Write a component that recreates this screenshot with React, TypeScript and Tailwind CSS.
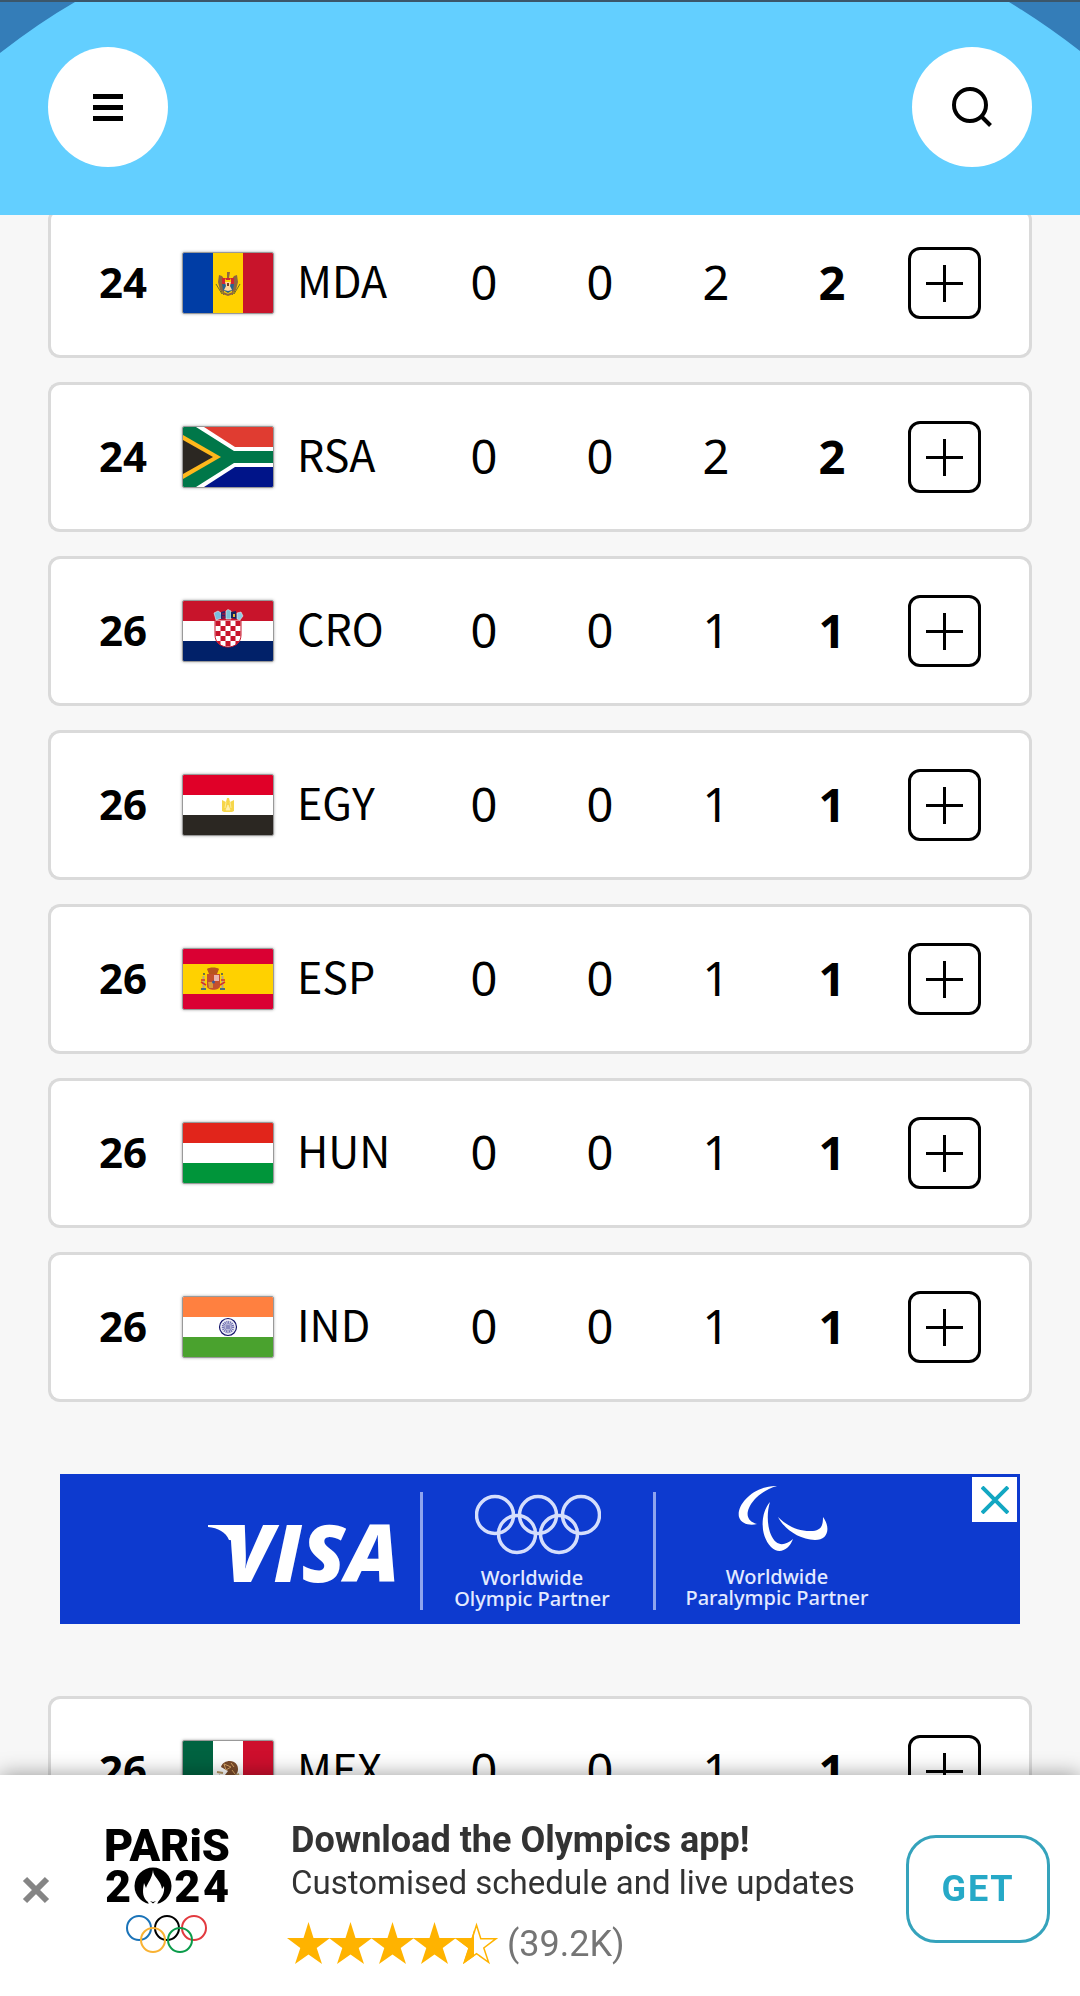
import React from "react";

type Row = { rank: number; code: string; gold: number; silver: number; bronze: number; total: number };

const before: Row[] = [
  { rank: 24, code: "MDA", gold: 0, silver: 0, bronze: 2, total: 2 },
  { rank: 24, code: "RSA", gold: 0, silver: 0, bronze: 2, total: 2 },
  { rank: 26, code: "CRO", gold: 0, silver: 0, bronze: 1, total: 1 },
  { rank: 26, code: "EGY", gold: 0, silver: 0, bronze: 1, total: 1 },
  { rank: 26, code: "ESP", gold: 0, silver: 0, bronze: 1, total: 1 },
  { rank: 26, code: "HUN", gold: 0, silver: 0, bronze: 1, total: 1 },
  { rank: 26, code: "IND", gold: 0, silver: 0, bronze: 1, total: 1 },
];

const after: Row[] = [{ rank: 26, code: "MEX", gold: 0, silver: 0, bronze: 1, total: 1 }];

function HBands({ colors }: { colors: [string, string, string] }) {
  return (
    <>
      <rect width="90" height="20" fill={colors[0]} />
      <rect y="20" width="90" height="20" fill={colors[1]} />
      <rect y="40" width="90" height="20" fill={colors[2]} />
    </>
  );
}

function VBands({ colors }: { colors: [string, string, string] }) {
  return (
    <>
      <rect width="30" height="60" fill={colors[0]} />
      <rect x="30" width="30" height="60" fill={colors[1]} />
      <rect x="60" width="30" height="60" fill={colors[2]} />
    </>
  );
}

const checks: [number, number][] = [];
for (let r = 0; r < 5; r++) for (let c = 0; c < 5; c++) if ((r + c) % 2 === 0) checks.push([c, r]);

const flags: Record<string, React.ReactNode> = {
  MDA: (
    <>
      <VBands colors={["#003da5", "#ffd100", "#c8142b"]} />
      <path d="M44 19h3l-1 6h-2zM36 22l3 1 2 3v14l-4-3-2-8zM54 22l-3 1-2 3v14l4-3 2-8z" fill="#8e6640" />
      <path d="M33 31l6 10M57 31l-6 10M38 38l3 4M52 38l-3 4" stroke="#6f6b2d" strokeWidth="1" />
      <path d="M39 25h12v6H39z" fill="#d22630" />
      <path d="M42 25l1 2h4l1-2v4h-6z" fill="#ffd100" />
      <path d="M39 31h12l-1 6-5 3-5-3z" fill="#27628f" />
      <path d="M42 29h6l-1 4 2 4-4 1-4-1 2-4z" fill="#ffd9a0" />
      <path d="M44 30h2v3h-2z" fill="#7b3d24" />
      <path d="M40 40l5 2 5-2" fill="none" stroke="#8e6640" strokeWidth="2" />
    </>
  ),
  RSA: (
    <>
      <rect width="90" height="60" fill="#fff" />
      <path d="M21 0H90V20H52Z" fill="#e03c31" />
      <path d="M21 60H90V40H52Z" fill="#001489" />
      <path d="M0 0H13L51 24H90V36H51L13 60H0Z" fill="#007749" />
      <path d="M0 8L38 30 0 52Z" fill="#ffb81c" />
      <path d="M0 13L30 30 0 47Z" fill="#2b2722" />
    </>
  ),
  CRO: (
    <>
      <HBands colors={["#c8142b", "#fff", "#012169"]} />
      <path d="M32 19V34C32 50 58 50 58 34V19Z" fill="#fff" stroke="#c8142b" strokeWidth="1" />
      <clipPath id="cro-shield">
        <path d="M32 19V34C32 50 58 50 58 34V19Z" />
      </clipPath>
      <g clipPath="url(#cro-shield)">
        {checks.map(([c, r]) => (
          <rect key={c + "-" + r} x={32.5 + c * 5} y={20 + r * 5} width="5" height="5" fill="#c8142b" />
        ))}
      </g>
      <path d="M31 12l4-2 3 2 1 5-6 2z" fill="#79bde0" stroke="#eee" strokeWidth=".6" />
      <path d="M38 11l4-1 1 7-5 1z" fill="#2a2468" />
      <path d="M43 10l2-1.500 3 1.500v8h-5z" fill="#7cc3d4" stroke="#eee" strokeWidth=".6" />
      <path d="M48 11l5-1 1 8-6-1z" fill="#17235d" />
      <path d="M54 12l4-1 2 4-3 4-3-1z" fill="#8ccce6" stroke="#eee" strokeWidth=".6" />
      <path d="M39 13h3M39 16h3" stroke="#c8142b" />
      <path d="M50 13h2v3h-2z" fill="#e6b73b" />
    </>
  ),
  EGY: (
    <>
      <HBands colors={["#e00028", "#fff", "#2b2722"]} />
      <path d="M39 25l4 2 1-4h2l1 4 4-2v11l-2 1h-8l-2-1z" fill="#f6d64a" />
      <path d="M43 27l-1 6M47 27l1 6M43 35l2-5 2 5z" fill="#fff0b0" stroke="#fff0b0" strokeWidth=".8" />
    </>
  ),
  ESP: (
    <>
      <rect width="90" height="60" fill="#da0033" />
      <rect y="15" width="90" height="30" fill="#ffd100" />
      <path d="M24 20c2-2 10-2 12 0l-2 5h-8z" fill="#b8541f" />
      <path d="M24 25h13v12c0 5-13 5-13 0z" fill="#c4502d" />
      <path d="M31 26h5v6h-5z" fill="#eab5b0" />
      <path d="M25 33h5v6h-4z" fill="#d89a3a" />
      <circle cx="30.500" cy="33" r="1.500" fill="#3a5a9c" />
      <path d="M20.500 27v12M39.500 27v12" stroke="#b7a58c" strokeWidth="2" />
      <path d="M18 33l5 3M42 33l-5 3M18 31h4M38 31h4" stroke="#d4352c" strokeWidth="1.500" />
      <path d="M18 40h5M37 40h5" stroke="#4f6f78" strokeWidth="2" />
      <path d="M20 25h2M38 25h2" stroke="#6d7442" strokeWidth="2" />
    </>
  ),
  HUN: <HBands colors={["#e1251b", "#fff", "#00953a"]} />,
  IND: (
    <>
      <HBands colors={["#ff8040", "#fff", "#4aa22e"]} />
      <circle cx="45" cy="30" r="8.500" fill="#eeeef8" stroke="#15156b" strokeWidth="1.200" />
      <circle cx="45" cy="30" r="4.500" fill="none" stroke="#6f6fb0" strokeWidth="3.500" strokeDasharray="1 .6" />
      <circle cx="45" cy="30" r="2.500" fill="#8a8abf" />
    </>
  ),
  MEX: (
    <>
      <VBands colors={["#006341", "#fff", "#ce0f2d"]} />
      <path d="M38 26c2-7 13-8 16-2 2 4 1 9-3 11l-9-1 3-4z" fill="#7a4b2a" />
      <path d="M41 23l7 3-5 3zM49 29l3 4M48 22l3 4" stroke="#d8a564" fill="none" />
      <path d="M34 31l6 1M52 35l4-2" stroke="#b99a67" strokeWidth="2" />
      <path d="M36 34c4 8 14 8 18 0" fill="none" stroke="#4c7f75" strokeWidth="2" />
    </>
  ),
};

function Flag({ code }: { code: string }) {
  return (
    <svg
      viewBox="0 0 90 60"
      role="img"
      aria-label={"Flag of " + code}
      className="box-content h-[60px] w-[90px] shrink-0 rounded-xs border border-[#999] shadow-[0_0_3px_rgba(0,0,0,0.35)]"
    >
      {flags[code]}
    </svg>
  );
}

function MedalRow({ row }: { row: Row }) {
  const cell = "h-[150px] border-y-3 border-[#dadada] bg-white p-0 align-middle";
  const num = cell + " pb-[2px] text-center text-[47px] leading-[64px]";
  return (
    <tr>
      <td className={cell + " rounded-l-xl border-l-3 pb-[2px] pl-12 text-left text-[42px] leading-[56px] font-bold"}>
        {row.rank}
      </td>
      <th scope="row" className={cell + " font-normal"}>
        <div className="flex items-center gap-[23px]">
          <Flag code={row.code} />
          <span className="pb-2 font-['Noto_Sans_CJK_SC',sans-serif] text-[43px] leading-[60px]">{row.code}</span>
        </div>
      </th>
      <td className={num}>{row.gold}</td>
      <td className={num}>{row.silver}</td>
      <td className={num}>{row.bronze}</td>
      <td className={num + " font-bold"}>{row.total}</td>
      <td className={cell + " rounded-r-xl border-r-3 pl-[18px]"}>
        <button
          type="button"
          aria-label={"Show " + row.code + " details"}
          className="flex h-[72px] w-[73px] items-center justify-center rounded-xl border-3 border-black bg-white"
        >
          <svg viewBox="0 0 37 37" className="size-[37px]" stroke="#000" strokeWidth="3">
            <path d="M18.500 0V37M0 18.500H37" />
          </svg>
        </button>
      </td>
    </tr>
  );
}

function Divider() {
  return <div className="h-[118px] w-[3px] bg-[#8ea4ee]" />;
}

function VisaAd() {
  return (
    <div className="relative flex h-[150px] bg-[#0d3acf] pl-[148px] text-[#e3eaff]">
      <div className="flex w-[212px] items-center pt-1">
        <svg viewBox="0 -26 200 112" className="h-28 w-[200px]" role="img" aria-label="Visa">
          <text
            x="16"
            y="61"
            fill="#fff"
            fontFamily="Open Sans, sans-serif"
            fontSize="80"
            fontWeight="800"
            fontStyle="italic"
          >
            VISA
          </text>
          <path d="M0 4H34V20L21 19C18 11 10 7 0 6Z" fill="#fff" />
        </svg>
      </div>
      <div className="flex items-center pt-1">
        <Divider />
      </div>
      <div className="flex w-[230px] flex-col items-center pt-[19px]">
        <svg viewBox="0 0 126 62" className="h-[62px] w-[126px]" fill="none" stroke="#d5defc" strokeWidth="3.500">
          <circle cx="20" cy="22" r="18.500" />
          <circle cx="63" cy="22" r="18.500" />
          <circle cx="106" cy="22" r="18.500" />
          <circle cx="42" cy="41" r="18.500" />
          <circle cx="84" cy="41" r="18.500" />
        </svg>
        <p className="mt-3 pr-3 text-center text-[20px] leading-[21px] font-medium">
          Worldwide
          <br />
          Olympic Partner
        </p>
      </div>
      <div className="flex items-center pt-1">
        <Divider />
      </div>
      <div className="flex w-[254px] flex-col items-center pt-[10px]">
        <svg viewBox="0 0 100 70" className="h-[70px] w-[100px]" fill="#fff">
          <path d="M44 2C22 1 3 20 6 33C8 40 17 42 24 40C17 38 12 33 16 24C20 15 30 6 44 2Z" />
          <path d="M37 18C28 28 26 50 38 63C46 71 56 66 60 55C54 60 48 62 43 58C34 50 33 30 37 18Z" />
          <path d="M45 33C52 46 66 55 82 56C95 56 98 44 90 33C90 42 88 46 80 47C66 48 54 42 45 33Z" />
        </svg>
        <p className="mt-3 pr-3 text-center text-[20px] leading-[21px] font-medium">
          Worldwide
          <br />
          Paralympic Partner
        </p>
      </div>
      <button
        type="button"
        aria-label="Close ad"
        className="absolute top-[3px] right-[3px] flex size-[45px] items-center justify-center bg-white"
      >
        <svg viewBox="0 0 28 28" className="size-7" stroke="#12a7c2" strokeWidth="4">
          <path d="M1 1L27 27M27 1L1 27" />
        </svg>
      </button>
    </div>
  );
}

function ParisLogo() {
  return (
    <div className="flex w-[124px] flex-col items-center text-[45px] leading-[41px] font-black text-black">
      <div className="flex h-[41px] w-full items-center justify-center">PARiS</div>
      <div className="flex h-[41px] w-full items-center justify-between">
        <span>2</span>
        <svg viewBox="0 0 38 38" className="size-[38px]">
          <circle cx="19" cy="19" r="18.500" fill="#000" />
          <path
            d="M19 3C19 10 27 13 28 22L30 19C31 27 27 31 24 35L23 38H15L14 35C9 31 8 26 10 16L12 21C14 15 18 12 19 3Z"
            fill="#fff"
          />
          <path d="M16 34L19 35L22 34L19 36.500Z" fill="#000" />
        </svg>
        <span>2</span>
        <span>4</span>
      </div>
      <svg viewBox="0 0 82 38" className="mt-2 h-[38px] w-[82px]" fill="none" strokeWidth="2">
        <circle cx="13" cy="13" r="12" stroke="#1a73b8" />
        <circle cx="41" cy="13" r="12" stroke="#000" />
        <circle cx="68" cy="13" r="12" stroke="#e23a3f" />
        <circle cx="27" cy="25" r="12" stroke="#f9b233" />
        <circle cx="54" cy="25" r="12" stroke="#0a9b4a" />
      </svg>
    </div>
  );
}

const STAR = "M21.500 0L26.500 16H43L29.700 26L35 42L21.500 32.500L8 42L13.300 26L0 16H16.500Z";

function Stars() {
  return (
    <svg viewBox="0 0 212 43" className="h-[43px] w-[212px]" role="img" aria-label="4.5 out of 5 stars">
      {[0, 42, 84, 126].map((x) => (
        <path key={x} d={STAR} transform={"translate(" + x + " 0)"} fill="#ffb300" />
      ))}
      <clipPath id="half-star">
        <rect width="19" height="43" />
      </clipPath>
      <g transform="translate(168 0)">
        <path d={STAR} fill="#ffb300" clipPath="url(#half-star)" />
        <path
          d="M21.500 3L25.800 16.700H41L28.800 26L33.600 40.300L21.500 31.700L9.400 40.300L14.200 26L2 16.700H17.200Z"
          fill="none"
          stroke="#ffb300"
          strokeWidth="1.500"
        />
      </g>
    </svg>
  );
}

export default function App() {
  return (
    <div className="min-h-screen overflow-hidden bg-[#f7f7f7] font-['Noto_Sans',sans-serif] text-black">
      <header className="fixed inset-x-0 top-0 z-10 flex h-[215px] items-start justify-between border-t-2 border-[#3b566a] bg-[#63cfff] px-12 pt-[45px]">
        <svg viewBox="0 0 75 52" className="absolute top-0 left-0 h-[52px] w-[75px]" fill="#347db8">
          <path d="M0 0H75Q40 20 0 51Z" />
        </svg>
        <svg viewBox="0 0 75 52" className="absolute top-0 right-0 h-[52px] w-[75px]" fill="#347db8">
          <path d="M75 0H4Q40 22 75 49Z" />
        </svg>
        <button
          type="button"
          aria-label="Menu"
          className="relative flex size-[120px] items-center justify-center rounded-full bg-white"
        >
          <svg viewBox="0 0 30 27" className="h-[27px] w-[30px]">
            <path d="M0 0H30V5H0ZM0 11H30V16H0ZM0 22H30V27H0Z" />
          </svg>
        </button>
        <button
          type="button"
          aria-label="Search"
          className="relative flex size-[120px] items-center justify-center rounded-full bg-white"
        >
          <svg viewBox="0 0 42 42" className="size-[42px]" fill="none" stroke="#000" strokeWidth="4">
            <circle cx="19" cy="19" r="16" />
            <path d="M30 30L39.500 39.500" />
          </svg>
        </button>
      </header>

      <main className="px-12 pt-[184px] pb-[221px]">
        <table aria-label="Medal standings" className="w-full table-fixed border-separate border-spacing-x-0 border-spacing-y-6">
          <colgroup>
            <col className="w-[134px]" />
            <col />
            <col className="w-[116px]" />
            <col className="w-[116px]" />
            <col className="w-[116px]" />
            <col className="w-[116px]" />
            <col className="w-[142px]" />
          </colgroup>
          <tbody>
            {before.map((row) => (
              <MedalRow key={row.code} row={row} />
            ))}
            <tr>
              <td colSpan={7} className="px-3 py-12">
                <VisaAd />
              </td>
            </tr>
            {after.map((row) => (
              <MedalRow key={row.code} row={row} />
            ))}
          </tbody>
        </table>
      </main>

      <footer className="fixed inset-x-0 bottom-0 z-10 flex h-[221px] items-center bg-white pt-[6px] pr-[30px] pl-[22px] font-[Roboto,sans-serif] shadow-[0_0_20px_rgba(0,0,0,0.4)]">
        <button type="button" aria-label="Dismiss" className="pt-[2px]">
          <svg viewBox="0 0 28 28" className="size-7" stroke="#858585" strokeWidth="6">
            <path d="M3 3L25 25M25 3L3 25" />
          </svg>
        </button>
        <div className="ml-[55px]">
          <ParisLogo />
        </div>
        <div className="ml-[62px] flex-1 pt-[6px] text-[#333]">
          <h2 className="text-[36px] leading-[44px] font-bold">Download the Olympics app!</h2>
          <p className="text-[33px] leading-[42px]">Customised schedule and live updates</p>
          <div className="-ml-1 flex items-center gap-2 pt-[18px]">
            <Stars />
            <span className="text-[36px] leading-[44px] text-[#757575]">(39.2K)</span>
          </div>
        </div>
        <button
          type="button"
          className="h-[108px] w-36 rounded-[30px] border-3 border-[#35a3bc] bg-white text-[36px] font-bold tracking-wider text-[#26a9c7]"
        >
          GET
        </button>
      </footer>
    </div>
  );
}
